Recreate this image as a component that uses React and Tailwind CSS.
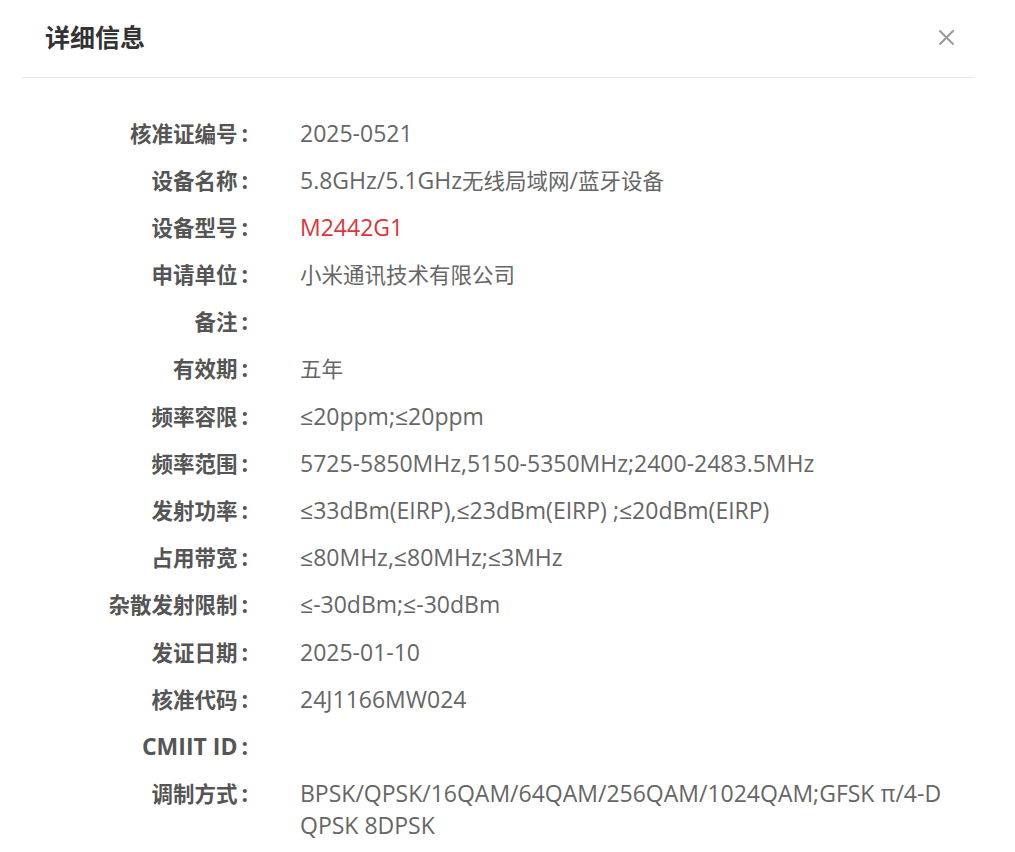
import React from "react";

const rows = [
  ["核准证编号", "2025-0521"],
  ["设备名称", "5.8GHz/5.1GHz无线局域网/蓝牙设备"],
  ["设备型号", "M2442G1", true],
  ["申请单位", "小米通讯技术有限公司"],
  ["备注", ""],
  ["有效期", "五年"],
  ["频率容限", "≤20ppm;≤20ppm"],
  ["频率范围", "5725-5850MHz,5150-5350MHz;2400-2483.5MHz"],
  ["发射功率", "≤33dBm(EIRP),≤23dBm(EIRP) ;≤20dBm(EIRP)"],
  ["占用带宽", "≤80MHz,≤80MHz;≤3MHz"],
  ["杂散发射限制", "≤-30dBm;≤-30dBm"],
  ["发证日期", "2025-01-10"],
  ["核准代码", "24J1166MW024"],
  ["CMIIT ID", ""],
  ["调制方式", "BPSK/QPSK/16QAM/64QAM/256QAM/1024QAM;GFSK π/4-D QPSK 8DPSK"],
];

function Mixed({ text }) {
  const parts = text.split(/([\u3000-\u9fff\uff00-\uffef]+)/);
  return parts.map((p, i) => {
    if (!p) return null;
    if (/[\u3000-\u9fff\uff00-\uffef]/.test(p)) {
      return (
        <span key={i} className="text-[21.5px] leading-[24px]">
          {p}
        </span>
      );
    }
    return (
      <span key={i} className="text-[23px] leading-[24px]">
        {p}
      </span>
    );
  });
}

export default function App() {
  return (
    <div className="w-[1015px] h-[852px] bg-white overflow-hidden font-['Open_Sans','Noto_Sans_CJK_SC',sans-serif]">
      <div className="ml-[22px] mr-[41px] h-[78px] border-b border-[#e8e8e8] flex items-center justify-between pl-[23px] pr-[19px] pb-[3px]">
        <div className="text-[25px] font-semibold text-[#333] font-['Noto_Sans_CJK_SC',sans-serif]">
          详细信息
        </div>
        <svg width="17" height="17" viewBox="0 0 17 17" className="mt-[1px]">
          <path d="M2 2 L15 15 M15 2 L2 15" stroke="#9a9a9a" strokeWidth="2" strokeLinecap="round" />
        </svg>
      </div>
      <div className="pt-[42.5px] pr-[41px] grid grid-cols-[248px_1fr] gap-x-[52px] gap-y-[15.7px] leading-[31.5px]">
        {rows.map(([label, value, red], i) => (
          <React.Fragment key={i}>
            <div className="text-right font-bold text-[#555] whitespace-nowrap">
              <Mixed text={label} />
              <span className="text-[23px] leading-[24px] pl-[4px]">:</span>
            </div>
            <div className={red ? "text-[#e0333a]" : "text-[#666]"}>
              {value ? <Mixed text={value} /> : <span className="text-[23px] leading-[24px]">&nbsp;</span>}
            </div>
          </React.Fragment>
        ))}
      </div>
    </div>
  );
}
